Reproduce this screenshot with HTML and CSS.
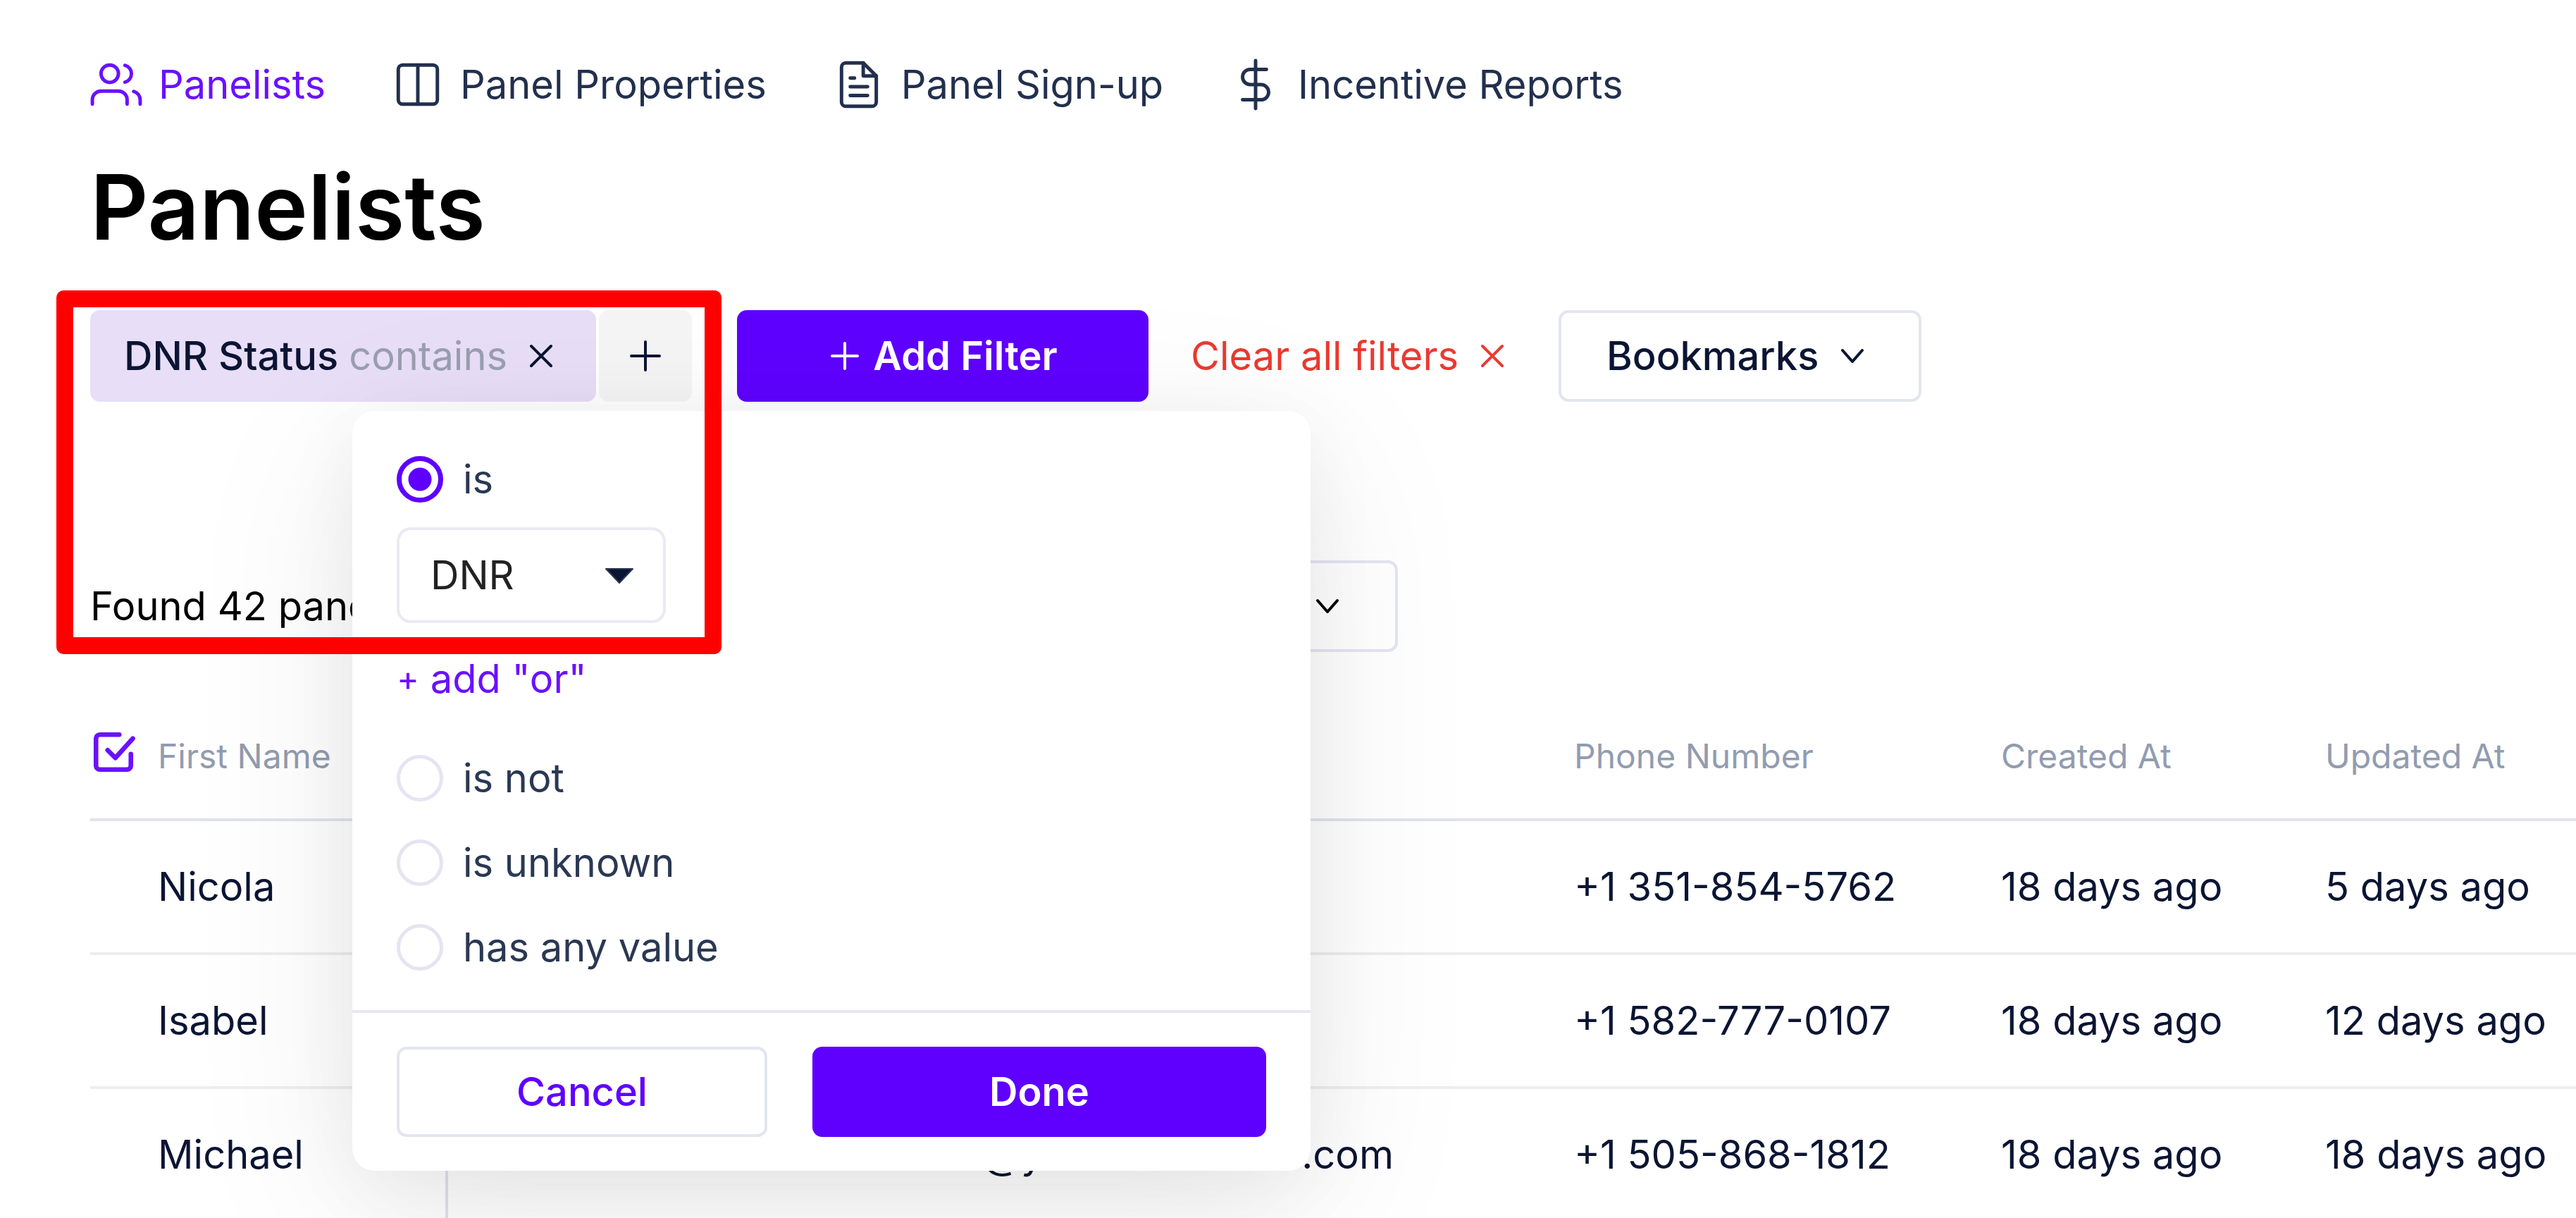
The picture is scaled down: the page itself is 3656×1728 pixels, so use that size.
FILE: index.html
```html
<!DOCTYPE html>
<html lang="en">
<head>
    <meta charset="UTF-8">
    <meta name="viewport" content="width=device-width, initial-scale=1.0">
    <title>Panelists</title>
    <link rel="stylesheet" href="styles.css">
</head>
<body>
    <nav class="nav">
        <a href="#" class="active">
            <svg class="nav-icon" viewBox="0 0 24 24"><path d="M17 21v-2a4 4 0 0 0-4-4H5a4 4 0 0 0-4 4v2"/><circle cx="9" cy="7" r="4"/><path d="M23 21v-2a4 4 0 0 0-3-3.87"/><path d="M16 3.13a4 4 0 0 1 0 7.75"/></svg>
            Panelists
        </a>
        <a href="#">
            <svg class="nav-icon" viewBox="0 0 24 24"><rect x="3" y="3" width="18" height="18" rx="2"/><path d="M12 3v18"/></svg>
            Panel Properties
        </a>
        <a href="#">
            <svg class="nav-icon" viewBox="0 0 24 24"><path d="M14 2H6a2 2 0 0 0-2 2v16a2 2 0 0 0 2 2h12a2 2 0 0 0 2-2V8z"/><path d="M14 2v6h6"/><path d="M16 13H8"/><path d="M16 17H8"/><path d="M10 9H8"/></svg>
            Panel Sign-up
        </a>
        <a href="#">
            <svg class="nav-icon" viewBox="0 0 24 24"><path d="M12 1v22"/><path d="M17 5H9.500a3.500 3.500 0 0 0 0 7h5a3.500 3.500 0 0 1 0 7H6"/></svg>
            Incentive Reports
        </a>
    </nav>

    <main>
        <h1>Panelists</h1>

        <div class="filters">
            <div class="filter-group">
                <button class="pill">
                    <span>DNR Status <span class="muted">contains</span></span>
                    <svg class="icon" viewBox="0 0 24 24"><path d="M5 5l14 14M19 5L5 19"/></svg>
                </button>
                <button class="plus" aria-label="Add condition">
                    <svg class="icon" viewBox="0 0 24 24"><path d="M12 2v20M2 12h20"/></svg>
                </button>
            </div>
            <button class="primary add-filter">
                <svg class="icon" viewBox="0 0 24 24"><path d="M12 3v18M3 12h18"/></svg>
                Add Filter
            </button>
            <button class="clear">
                Clear all filters
                <svg class="icon" viewBox="0 0 24 24"><path d="M5 5l14 14M19 5L5 19"/></svg>
            </button>
            <button class="outline bookmarks">
                Bookmarks
                <svg class="icon" viewBox="0 0 24 24"><path d="M5 8l7 8 7-8"/></svg>
            </button>

            <form class="popup">
                <div class="options">
                    <label class="option"><input type="radio" name="op" checked> is</label>
                    <div class="select">
                        <select aria-label="DNR Status">
                            <option>DNR</option>
                        </select>
                        <svg class="arrow" viewBox="0 0 40 22"><path d="M1 1h38L20 21z"/></svg>
                    </div>
                    <button type="button" class="add-or"><span class="small">+</span> add "or"</button>
                    <label class="option"><input type="radio" name="op"> is not</label>
                    <label class="option"><input type="radio" name="op"> is unknown</label>
                    <label class="option"><input type="radio" name="op"> has any value</label>
                </div>
                <div class="popup-footer">
                    <button type="button" class="outline cancel">Cancel</button>
                    <button type="button" class="primary done">Done</button>
                </div>
            </form>
            <div class="highlight"></div>
        </div>

        <div class="found">
            <span>Found 42 panelists</span>
            <button class="outline actions">
                Actions
                <svg class="icon" viewBox="0 0 24 24"><path d="M5 8l7 8 7-8"/></svg>
            </button>
        </div>

        <table>
            <colgroup>
                <col class="col-check">
                <col class="col-first">
                <col>
                <col class="col-phone">
                <col class="col-created">
                <col class="col-updated">
            </colgroup>
            <thead>
                <tr>
                    <th><svg class="check" viewBox="0 0 24 24"><path d="M9 11l4 4L22 5"/><path d="M21 13v6a2 2 0 0 1-2 2H5a2 2 0 0 1-2-2V5a2 2 0 0 1 2-2h10"/></svg></th>
                    <th>First Name</th>
                    <th></th>
                    <th>Phone Number</th>
                    <th>Created At</th>
                    <th>Updated At</th>
                </tr>
            </thead>
            <tbody>
                <tr>
                    <td></td>
                    <td class="first">Nicola</td>
                    <td></td>
                    <td>+1 351-854-5762</td>
                    <td>18 days ago</td>
                    <td>5 days ago</td>
                </tr>
                <tr>
                    <td></td>
                    <td class="first">Isabel</td>
                    <td></td>
                    <td>+1 582-777-0107</td>
                    <td>18 days ago</td>
                    <td>12 days ago</td>
                </tr>
                <tr>
                    <td></td>
                    <td class="first">Michael</td>
                    <td class="email">michael@yourcommerce.com</td>
                    <td>+1 505-868-1812</td>
                    <td>18 days ago</td>
                    <td>18 days ago</td>
                </tr>
            </tbody>
        </table>
    </main>
</body>
</html>
```
FILE: styles.css
```css
* {
    box-sizing: border-box;
}
body {
    margin: 0;
    padding: 83px 0 0 128px;
    font-family: Inter, "Liberation Sans", sans-serif;
    font-size: 56px;
    line-height: 66px;
    color: #0b1533;
    background: white;
    overflow: hidden;
}
svg {
    display: block;
    flex: none;
    fill: none;
    stroke: currentColor;
    stroke-width: 2;
    stroke-linecap: round;
    stroke-linejoin: round;
}
button {
    display: flex;
    align-items: center;
    justify-content: center;
    gap: 16px;
    height: 130px;
    padding: 0;
    border: none;
    border-radius: 14px;
    background: none;
    color: inherit;
    font: inherit;
    white-space: nowrap;
    cursor: pointer;
}
.icon {
    width: 48px;
    height: 48px;
}

.nav {
    display: flex;
    gap: 94px;
}
.nav a {
    display: flex;
    align-items: center;
    gap: 23px;
    height: 74px;
    color: #22304e;
    text-decoration: none;
    white-space: nowrap;
}
.nav a.active {
    color: #6a11ff;
}
.nav-icon {
    width: 74px;
    height: 74px;
    stroke-width: 1.6;
}

h1 {
    margin: 57px 0 66px;
    font-size: 128px;
    line-height: 160px;
    font-weight: 600;
    color: black;
}

.filters {
    position: relative;
    display: flex;
    align-items: center;
}
.filter-group {
    display: flex;
    gap: 4px;
    margin-right: 64px;
}
.pill {
    padding: 0 54px 0 48px;
    gap: 24px;
    background: #e8def8;
    font-weight: 500;
}
.muted {
    font-weight: 400;
    color: #9a9fb0;
}
.plus {
    width: 132px;
    background: #f5f5f5;
}
.primary {
    background: #5f00ff;
    color: white;
    font-weight: 600;
}
.outline {
    border: 4px solid #e3e6f0;
}
.add-filter {
    width: 584px;
    margin-right: 60px;
}
.clear {
    margin-right: 70px;
    gap: 24px;
    color: #ea3a30;
}
.bookmarks {
    padding: 0 70px 0 64px;
    gap: 24px;
    font-weight: 500;
}

.popup {
    position: absolute;
    top: 143px;
    left: 372px;
    z-index: 1;
    width: 1360px;
    border-radius: 32px;
    background: white;
    color: #2a3853;
    box-shadow: 0 60px 400px rgba(0, 0, 0, 0.08), 0 24px 110px rgba(0, 0, 0, 0.06);
}
.options {
    padding: 64px 63px 56px;
}
.option {
    display: flex;
    align-items: center;
    gap: 28px;
    margin-bottom: 54px;
}
.option:last-child {
    margin-bottom: 0;
}
.option:first-child {
    margin-bottom: 35px;
}
.option input {
    appearance: none;
    width: 66px;
    height: 66px;
    margin: 0;
    border: 5px solid #e6e4f2;
    border-radius: 50%;
}
.option input:checked {
    border: 7px solid #5f00ff;
    background: radial-gradient(circle, #5f00ff 16px, transparent 17px);
}
.select {
    position: relative;
    width: 382px;
}
.select select {
    appearance: none;
    width: 100%;
    height: 136px;
    padding: 0 44px;
    border: 4px solid #ebe9f3;
    border-radius: 20px;
    background: white;
    color: #222;
    font: inherit;
}
.arrow {
    position: absolute;
    top: 58px;
    right: 46px;
    width: 40px;
    height: 22px;
    fill: #0b1533;
    pointer-events: none;
}
.add-or {
    height: 66px;
    margin: 46px 0 75px;
    color: #6a11ff;
}
.small {
    font-size: 48px;
}
.popup-footer {
    display: flex;
    gap: 64px;
    padding: 48px 63px;
    border-top: 4px solid #e5e8f1;
}
.cancel {
    width: 526px;
    height: 128px;
    color: #5f00ff;
    font-weight: 500;
}
.done {
    flex: 1;
    height: 128px;
}
.highlight {
    position: absolute;
    top: -28px;
    left: -48px;
    z-index: 2;
    width: 944px;
    height: 516px;
    border: 24px solid red;
    border-radius: 10px;
    pointer-events: none;
}

.found {
    display: flex;
    align-items: center;
    justify-content: space-between;
    width: 1856px;
    margin: 225px 0 60px;
    color: black;
}
.actions {
    padding: 0 72px;
}

table {
    width: 100%;
    table-layout: fixed;
    border-collapse: collapse;
}
.col-check {
    width: 96px;
}
.col-first {
    width: 410px;
}
.col-phone {
    width: 606px;
}
.col-created {
    width: 460px;
}
.col-updated {
    width: 356px;
}
th, td {
    padding: 0;
    text-align: left;
    white-space: nowrap;
}
th {
    height: 178px;
    border-bottom: 4px solid #e2e2ee;
    font-size: 48px;
    font-weight: 400;
    color: #929cb0;
}
td {
    height: 190px;
    border-bottom: 4px solid #eeeeee;
}
.first {
    border-right: 4px solid #e2e2ee;
}
.email {
    padding-right: 256px;
    text-align: right;
}
.check {
    width: 66px;
    height: 66px;
    margin-bottom: 12px;
    color: #6a11ff;
    stroke-width: 2.4;
}
```
